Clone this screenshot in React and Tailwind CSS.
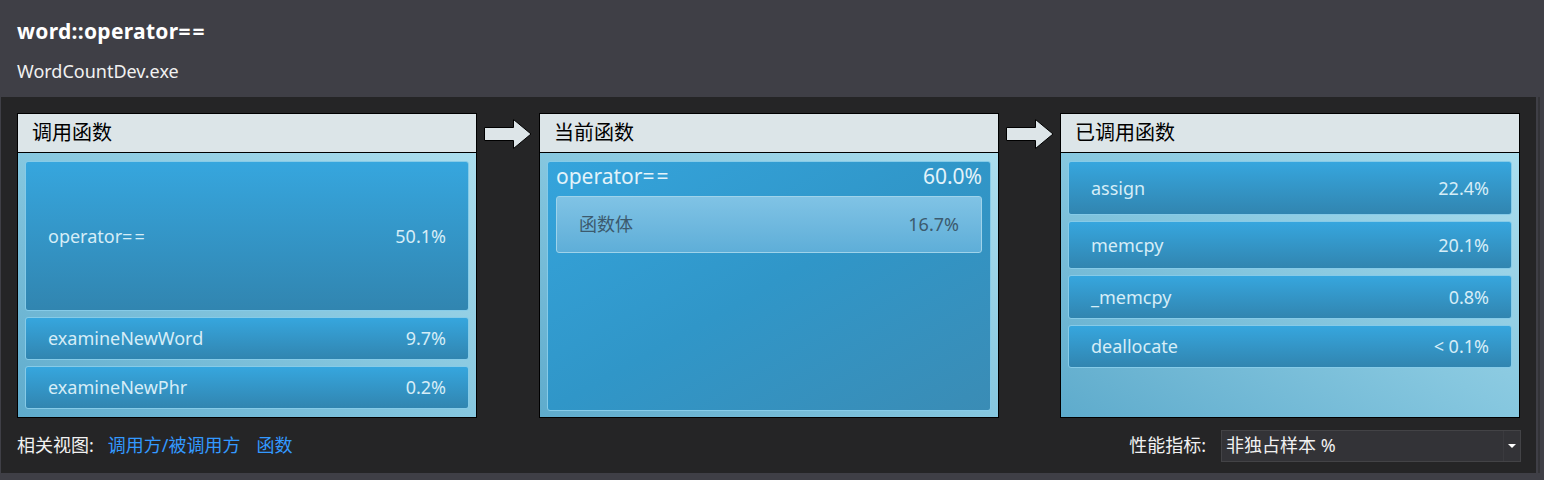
import React from 'react';

const font = { fontFamily: '"Noto Sans", "Noto Sans CJK SC", sans-serif' };

const callers = [
  { name: 'operator==', pct: '50.1%', h: 'h-[150px]' },
  { name: 'examineNewWord', pct: '9.7%', h: 'h-[43px]' },
  { name: 'examineNewPhr', pct: '0.2%', h: 'h-[43px]' },
];

const callees = [
  { name: 'assign', pct: '22.4%', h: 'h-[54px]' },
  { name: 'memcpy', pct: '20.1%', h: 'h-[48px]' },
  { name: '_memcpy', pct: '0.8%', h: 'h-[44px]' },
  { name: 'deallocate', pct: '< 0.1%', h: 'h-[43px]' },
];

// "==" is drawn wider in the original font, so give it some room
function Op({ base }) {
  return (
    <span>
      {base}
      <span className="tracking-[2px]">==</span>
    </span>
  );
}

function Label({ text }) {
  if (text.endsWith('==')) return <Op base={text.slice(0, -2)} />;
  return <span>{text}</span>;
}

function Arrow() {
  return (
    <svg width="48" height="30" viewBox="0 0 48 30" className="mt-[6px]">
      <path
        d="M0.5 8.5 H29.5 V0.5 L47 15 L29.5 29.5 V21.5 H0.5 Z"
        fill="#dde5e8"
        stroke="#000"
        strokeWidth="1"
      />
    </svg>
  );
}

function Panel({ title, children }) {
  return (
    <div className="w-[460px] h-[305px] flex flex-col border border-black">
      <div className="h-[39px] shrink-0 bg-[#dce5e8] border-b border-black flex items-center pl-[14px] text-[20px] text-black">
        {title}
      </div>
      <div className="flex-1 bg-gradient-to-tr from-[#5eabcc] via-[#86c7df] to-[#acdeee] px-[7px] pt-[8px] flex flex-col gap-[6px]">
        {children}
      </div>
    </div>
  );
}

function Row({ name, pct, h }) {
  return (
    <div
      className={`${h} shrink-0 rounded-[3px] border border-[#86cbe8] bg-gradient-to-b from-[#36a6de] to-[#3185b0] flex items-center justify-between pl-[22px] pr-[22px] text-[18px] text-[#d6edf7]`}
    >
      <Label text={name} />
      <span>{pct}</span>
    </div>
  );
}

export default function App() {
  return (
    <div className="w-[1544px] h-[480px] bg-[#3f3f46] flex flex-col overflow-hidden" style={font}>
      <div className="h-[97px] shrink-0 pl-[17px] pt-[16px]">
        <div className="text-[21px] font-bold text-white leading-[31px] tracking-[0.3px]">
          <Op base="word::operator" />
        </div>
        <div className="text-[18px] text-[#f1f1f1] leading-[24px] mt-[12px]">WordCountDev.exe</div>
      </div>
      <div className="flex h-[376px]">
        <div className="ml-px w-[1535px] bg-[#252526] flex flex-col">
          <div className="flex pl-[16px] pt-[16px]">
            <Panel title="调用函数">
              {callers.map((c) => (
                <Row key={c.name} {...c} />
              ))}
            </Panel>
            <div className="w-[62px] flex justify-center">
              <Arrow />
            </div>
            <Panel title="当前函数">
              <div className="flex-1 mb-[6px] rounded-[3px] border border-[#86cbe8] bg-gradient-to-br from-[#35a4dc] via-[#3096c8] to-[#3a8cb5] px-[8px] flex flex-col">
                <div className="flex justify-between text-[21px] text-[#e3f3fa] leading-[26px] pt-[1px]">
                  <Label text="operator==" />
                  <span>60.0%</span>
                </div>
                <div className="mt-[7px] h-[57px] rounded-[3px] border border-[#9fd3ea] bg-gradient-to-b from-[#80c3e5] to-[#5eaed8] flex items-center justify-between px-[22px] text-[18px] text-[#3c5a6e]">
                  <span>函数体</span>
                  <span>16.7%</span>
                </div>
              </div>
            </Panel>
            <div className="w-[61px] flex justify-center">
              <Arrow />
            </div>
            <Panel title="已调用函数">
              {callees.map((c) => (
                <Row key={c.name} {...c} />
              ))}
            </Panel>
          </div>
          <div className="flex items-center justify-between pl-[16px] pr-[15px] flex-1">
            <div className="flex items-center text-[18px]">
              <span className="text-[#f1f1f1]">相关视图:</span>
              <span className="ml-[14px] text-[#3399ff]">调用方/被调用方</span>
              <span className="ml-[16px] text-[#3399ff]">函数</span>
            </div>
            <div className="flex items-center text-[18px]">
              <span className="text-[#f1f1f1] mr-[15px]">性能指标:</span>
              <div className="w-[300px] h-[32px] bg-[#333337] border border-[#434346] flex items-center">
                <span className="flex-1 pl-[4px] text-[#f1f1f1]">非独占样本 %</span>
                <div className="w-[17px] h-full border-l border-[#3a3a3e] flex items-center justify-center">
                  <div className="w-0 h-0 border-l-[4px] border-r-[4px] border-t-[4px] border-l-transparent border-r-transparent border-t-white"></div>
                </div>
              </div>
            </div>
          </div>
        </div>
        <div className="ml-[2px] w-[2px] bg-[#333337]"></div>
      </div>
    </div>
  );
}
